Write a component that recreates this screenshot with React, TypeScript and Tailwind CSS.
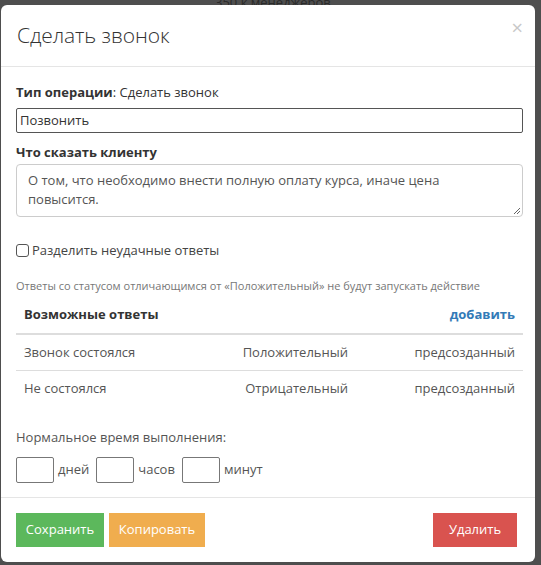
export default function App() {
  const rows = [
    { name: "Звонок состоялся", status: "Положительный", type: "предсозданный" },
    { name: "Не состоялся", status: "Отрицательный", type: "предсозданный" },
  ];
  return (
    <div className="w-[541px] h-[565px] overflow-hidden bg-[#4e4e4e] relative" style={{ fontFamily: '"Open Sans", "Liberation Sans", sans-serif' }}>
      <div className="absolute top-[-4px] left-[215px] text-[13px] leading-[12px] text-[#2a2a2a]">350 к менеджеров</div>
      <div className="absolute left-[1px] top-[5px] w-[534px] h-[557px] bg-white rounded-[6px] text-[#333] flex flex-col">
        {/* header */}
        <div className="h-[62px] border-b border-[#e5e5e5] flex items-center justify-between pl-[16px] pr-[12px]">
          <h1 className="text-[21px] font-light text-[#333] tracking-[-0.1px] mt-[0px]">Сделать звонок</h1>
          <span className="text-[20px] leading-none text-[#c8c8c8] -mt-[16px]">×</span>
        </div>
        {/* body */}
        <div className="pl-[15px] pr-[12px] pt-[16px] flex-1 text-[13px]">
          <p className="leading-[18px]"><b className="font-bold">Тип операции</b>: Сделать звонок</p>
          <div className="mt-[7px] h-[25px] border border-[#555] rounded-[2px] flex items-center px-[3px] text-[#333]">Позвонить</div>
          <p className="mt-[10px] font-bold leading-[18px]">Что сказать клиенту</p>
          <div className="mt-[3px] h-[53px] border border-[#ccc] rounded-[4px] pl-[11px] pr-[40px] pt-[6px] leading-[19px] text-[#555] relative">
            О том, что необходимо внести полную оплату курса, иначе цена повысится.
            <svg className="absolute right-[1px] bottom-[1px]" width="8" height="8" viewBox="0 0 8 8"><path d="M7 1L1 7M7 4L4 7" stroke="#666" strokeWidth="1" /></svg>
          </div>
          <label className="mt-[24px] flex items-center gap-[3px] leading-[18px]">
            <span className="w-[13px] h-[13px] border border-[#555] rounded-[3px] bg-white" />
            <span className="text-[#444]">Разделить неудачные ответы</span>
          </label>
          <p className="mt-[20px] text-[11px] text-[#777] leading-[14px]">Ответы со статусом отличающимся от «Положительный» не будут запускать действие</p>
          {/* table */}
          <div className="mt-[3px]">
            <div className="flex items-center justify-between px-[8px] h-[39px] border-b-2 border-[#ddd]">
              <span className="font-bold text-[#333]">Возможные ответы</span>
              <span className="font-bold text-[#337ab7]">добавить</span>
            </div>
            {rows.map((r, i) => (
              <div key={r.name} className={`flex items-center px-[8px] h-[36px] text-[#555] ${i === 0 ? "border-b border-[#ddd]" : ""}`}>
                <span className="flex-1">{r.name}</span>
                <span className="w-[110px] text-right">{r.status}</span>
                <span className="w-[167px] text-right">{r.type}</span>
              </div>
            ))}
          </div>
          <p className="mt-[21px] text-[#555] leading-[18px]">Нормальное время выполнения:</p>
          <div className="mt-[11px] flex items-center text-[#555]">
            <span className="w-[38px] h-[26px] border border-[#777] rounded-[2px]" />
            <span className="ml-[4px] mr-[7px]">дней</span>
            <span className="w-[38px] h-[26px] border border-[#777] rounded-[2px]" />
            <span className="ml-[4px] mr-[7px]">часов</span>
            <span className="w-[38px] h-[26px] border border-[#777] rounded-[2px]" />
            <span className="ml-[4px]">минут</span>
          </div>
        </div>
        {/* footer */}
        <div className="border-t border-[#e5e5e5] h-[65px] pl-[15px] pr-[18px] flex items-center text-[13px] text-white">
          <button className="h-[34px] w-[88px] bg-[#5cb85c]">Сохранить</button>
          <button className="ml-[5px] h-[34px] w-[96px] bg-[#f0ad4e]">Копировать</button>
          <button className="ml-auto h-[34px] w-[84px] bg-[#d9534f]">Удалить</button>
        </div>
      </div>
    </div>
  );
}
